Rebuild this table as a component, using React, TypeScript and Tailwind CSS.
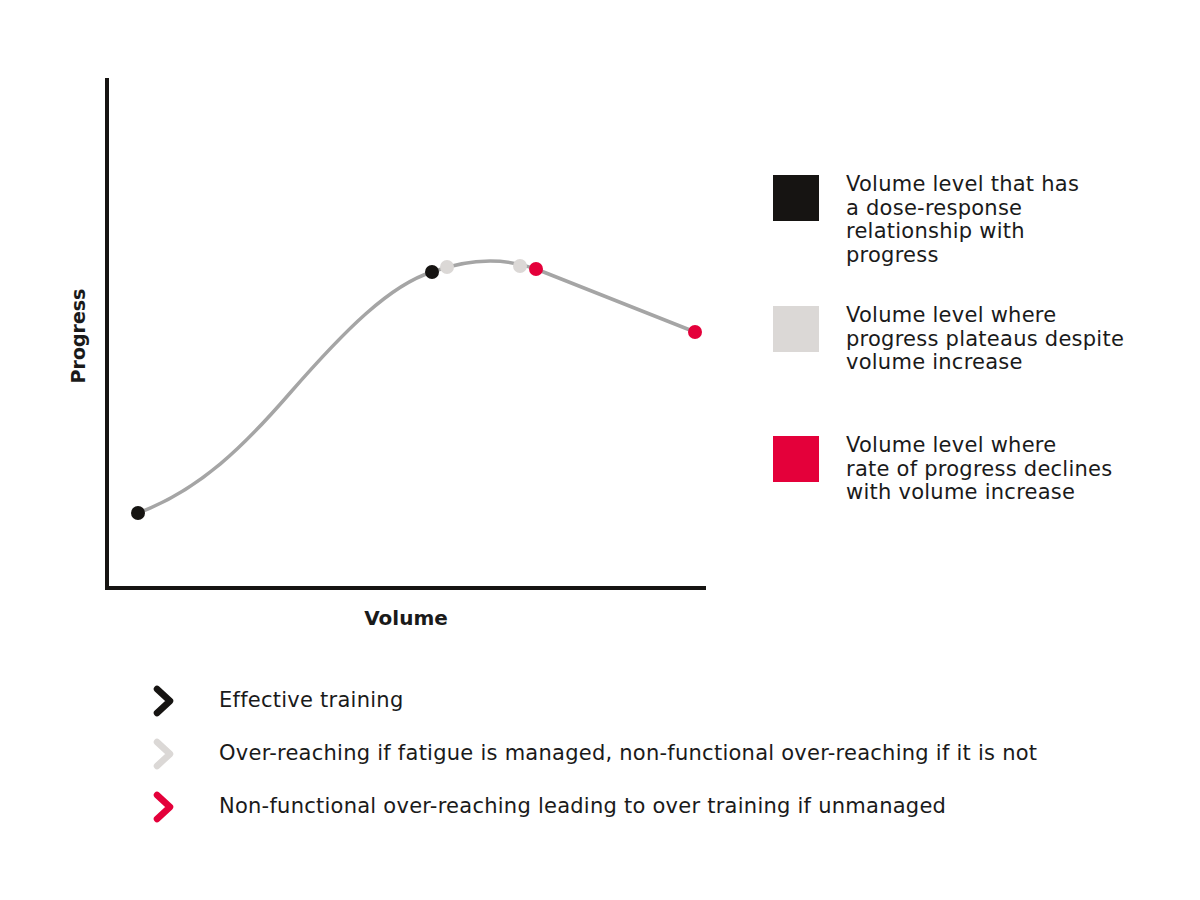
const legend = [
  {
    color: "bg-[#161412]",
    lines: ["Volume level that has", "a dose-response", "relationship with", "progress"],
    gap: "mt-0",
  },
  {
    color: "bg-[#dbd8d6]",
    lines: ["Volume level where", "progress plateaus despite", "volume increase"],
    gap: "mt-[39px]",
  },
  {
    color: "bg-[#e4003a]",
    lines: ["Volume level where", "rate of progress declines", "with volume increase"],
    gap: "mt-[61.5px]",
  },
];

const notes = [
  { color: "#161412", text: "Effective training" },
  { color: "#dbd8d6", text: "Over-reaching if fatigue is managed, non-functional over-reaching if it is not" },
  { color: "#e4003a", text: "Non-functional over-reaching leading to over training if unmanaged" },
];

const dots = [
  { x: 138, y: 513, c: "#161412" },
  { x: 432, y: 272, c: "#161412" },
  { x: 447, y: 267, c: "#dbd8d6" },
  { x: 520, y: 266, c: "#dbd8d6" },
  { x: 536, y: 269, c: "#e4003a" },
  { x: 695, y: 332, c: "#e4003a" },
];

const Chart = () => (
  <svg width="730" height="645" viewBox="0 0 730 645" className="shrink-0">
    <path
      d="M138,513 C200,490 245,445 290,393 C345,330 390,285 432,272 C465,260 500,256 536,269 L695,332"
      fill="none"
      stroke="#a5a5a5"
      strokeWidth="3.5"
    />
    {dots.map((d, i) => (
      <circle key={i} cx={d.x} cy={d.y} r="7" fill={d.c} />
    ))}
    <path d="M107,78 L107,588 L706,588" fill="none" stroke="#161412" strokeWidth="4" />
    <text
      x="406"
      y="625"
      textAnchor="middle"
      fontSize="20"
      fontWeight="700"
      fill="#1a1a1a"
      fontFamily="'DejaVu Sans', sans-serif"
    >
      Volume
    </text>
    <text
      x="0"
      y="0"
      transform="translate(85,336) rotate(-90)"
      textAnchor="middle"
      fontSize="19"
      fontWeight="700"
      fill="#1a1a1a"
      fontFamily="'DejaVu Sans', sans-serif"
    >
      Progress
    </text>
  </svg>
);

const Chevron = ({ color }: { color: string }) => (
  <svg width="24" height="34" viewBox="0 0 24 34" className="shrink-0">
    <path
      d="M5,5 L18,17 L5,29"
      fill="none"
      stroke={color}
      strokeWidth="6.5"
      strokeLinecap="round"
      strokeLinejoin="round"
    />
  </svg>
);

export default function App() {
  return (
    <div className="w-[1200px] h-[900px] bg-white text-[#1a1a1a] font-['DejaVu_Sans',sans-serif] overflow-hidden">
      <div className="flex">
        <Chart />
        <div className="ml-[43px] pt-[175px]">
          {legend.map((item, i) => (
            <div key={i} className={`flex ${item.gap}`}>
              <div className={`w-[46px] h-[46px] shrink-0 ${item.color}`} />
              <div className="ml-[27px] -mt-[2px] text-[21px] leading-[23.5px] tracking-[0.25px]">
                {item.lines.map((l) => (
                  <div key={l}>{l}</div>
                ))}
              </div>
            </div>
          ))}
        </div>
      </div>
      <div className="mt-[29px] pl-[152px]">
        {notes.map((n) => (
          <div key={n.text} className="flex items-center h-[53px]">
            <Chevron color={n.color} />
            <span className="ml-[43px] text-[21px] tracking-[0.25px]">{n.text}</span>
          </div>
        ))}
      </div>
    </div>
  );
}
